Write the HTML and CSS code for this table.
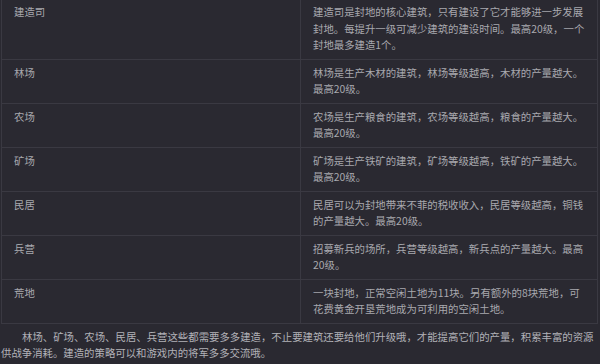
FILE: index.html
```html
<!DOCTYPE html>
<html lang="zh">
<head>
<meta charset="utf-8">
<link rel="stylesheet" href="styles.css">
</head>
<body>
<div class="page">
<table class="info">
<tr><td class="name">建造司</td><td class="desc">建造司是封地的核心建筑，只有建设了它才能够进一步发展封地。每提升一级可减少建筑的建设时间。最高20级，一个封地最多建造1个。</td></tr>
<tr><td class="name">林场</td><td class="desc">林场是生产木材的建筑，林场等级越高，木材的产量越大。最高20级。</td></tr>
<tr><td class="name">农场</td><td class="desc">农场是生产粮食的建筑，农场等级越高，粮食的产量越大。最高20级。</td></tr>
<tr><td class="name">矿场</td><td class="desc">矿场是生产铁矿的建筑，矿场等级越高，铁矿的产量越大。最高20级。</td></tr>
<tr><td class="name">民居</td><td class="desc">民居可以为封地带来不菲的税收收入，民居等级越高，铜钱的产量越大。最高20级。</td></tr>
<tr><td class="name">兵营</td><td class="desc">招募新兵的场所，兵营等级越高，新兵点的产量越大。最高20级。</td></tr>
<tr><td class="name">荒地</td><td class="desc">一块封地，正常空闲土地为11块。另有额外的8块荒地，可花费黄金开垦荒地成为可利用的空闲土地。</td></tr>
</table>
<p class="note">林场、矿场、农场、民居、兵营这些都需要多多建造，不止要建筑还要给他们升级哦，才能提高它们的产量，积累丰富的资源供战争消耗。建造的策略可以和游戏内的将军多多交流哦。</p>
</div>
</body>
</html>
```
FILE: styles.css
```css
html, body {
  margin: 0;
  padding: 0;
  background: #2a2931;
}
body {
  width: 600px;
  height: 364px;
  overflow: hidden;
  font-family: "Noto Sans CJK SC", "Microsoft YaHei", sans-serif;
  font-size: 10.4px;
  line-height: 16.5px;
  color: #a8a8ae;
}
.page {
  padding: 0 2px 0 1px;
}
.info {
  width: 597px;
  margin-top: -2px;
  border-collapse: collapse;
  table-layout: fixed;
}
.info td {
  border: 1px solid #3a3942;
  padding: 5px 12px;
  vertical-align: top;
}
.info .name {
  width: 274px;
}
.note {
  margin: 5px 0 0 0;
  line-height: 16px;
  text-indent: 21px;
  color: #b2b2b8;
}
```
